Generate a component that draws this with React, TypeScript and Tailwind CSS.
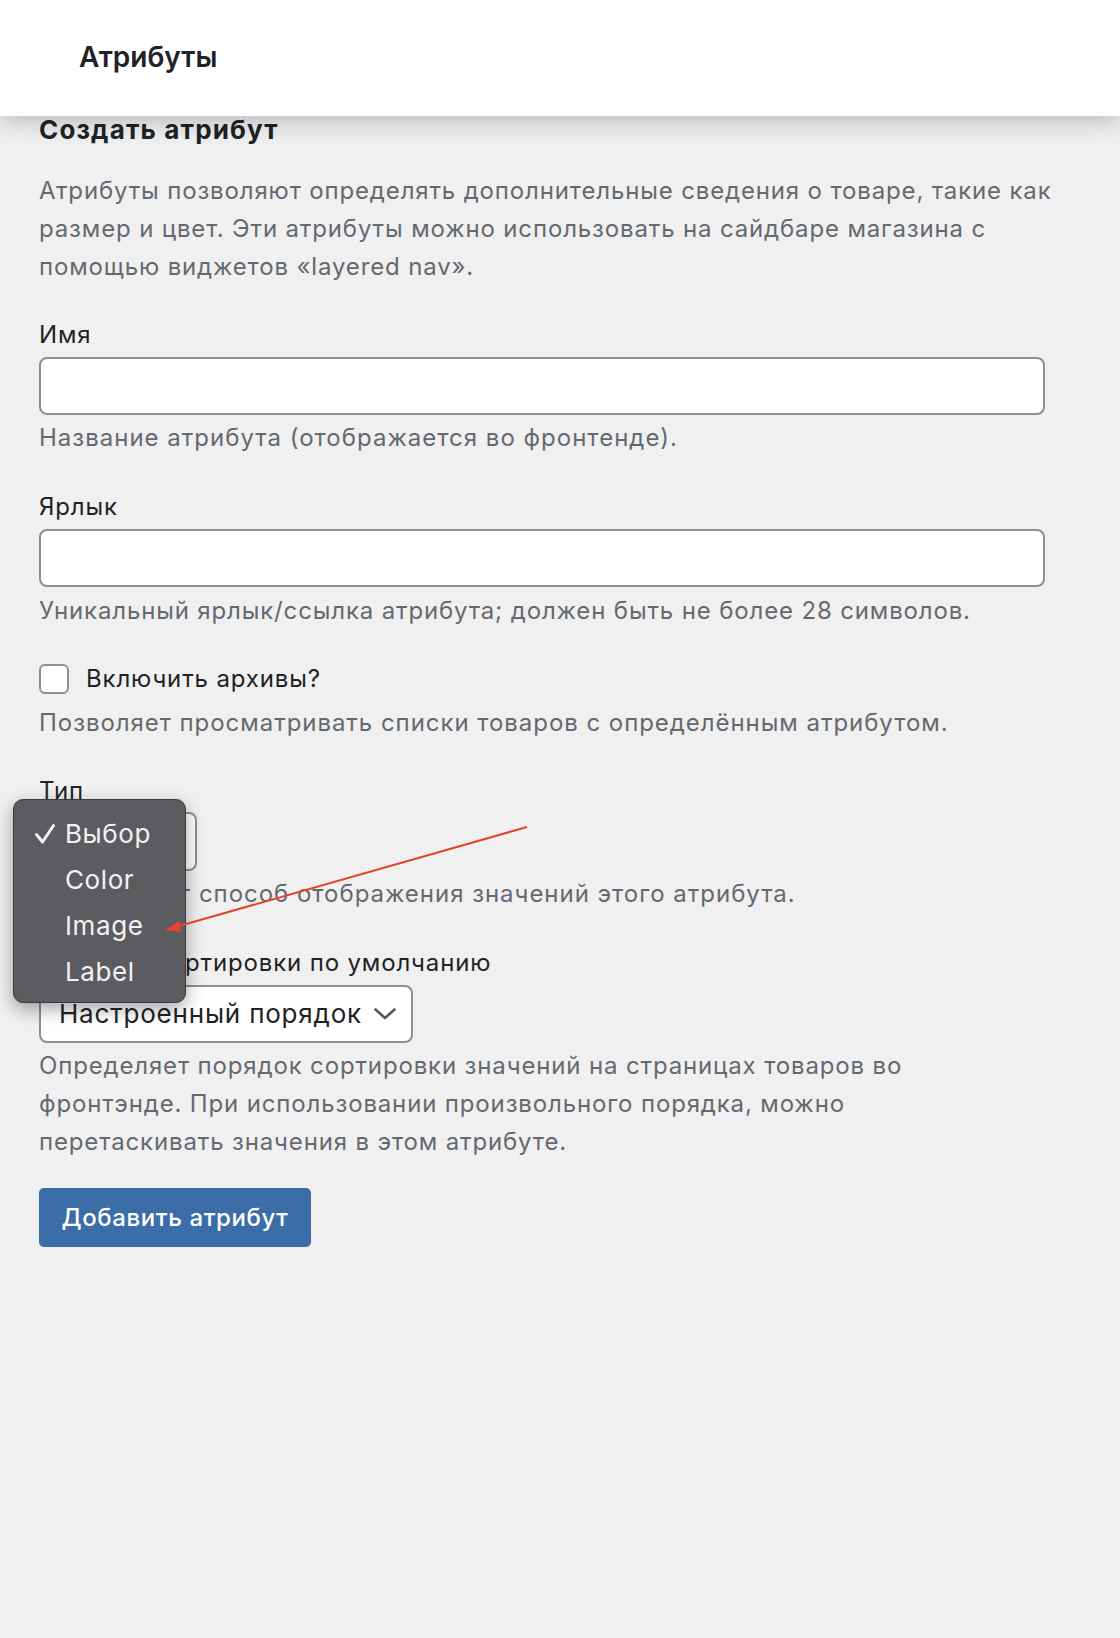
import React from "react";

const Chevron = ({ className }: { className?: string }) => (
  <svg className={className} width="22" height="12" viewBox="0 0 22 12" fill="none">
    <path d="M1.5 1.5 L11 10 L20.5 1.5" stroke="#50575e" strokeWidth="2.6" strokeLinecap="round" strokeLinejoin="round" />
  </svg>
);

const Check = () => (
  <svg width="22" height="22" viewBox="0 0 22 22" fill="none">
    <path d="M2.5 11.5 L8.5 19 L19.5 2.5" stroke="#f2f2f2" strokeWidth="3" strokeLinecap="round" strokeLinejoin="round" />
  </svg>
);

export default function App() {
  return (
    <div className="relative min-h-[1638px] w-[1120px] bg-[#f0f0f0] font-['Inter',sans-serif] text-[#1d2327] overflow-hidden">
      <header className="relative z-10 flex h-[116px] items-center bg-white pl-[79px] pb-[3px] shadow-[0_4px_24px_rgba(0,0,0,0.25)]">
        <h1 className="text-[28px] font-semibold leading-[36px] text-[#1d2327]">Атрибуты</h1>
      </header>

      <main className="pl-[39px] text-[24px] tracking-[0.85px]">
        <h2 className="text-[26px] font-bold leading-[28px] tracking-[1.15px] text-[#1d2327]">Создать атрибут</h2>

        <p className="mt-[28px] leading-[38px] text-[#646970]">
          <span className="block whitespace-nowrap">Атрибуты позволяют определять дополнительные сведения о товаре, такие как</span>
          <span className="block whitespace-nowrap">размер и цвет. Эти атрибуты можно использовать на сайдбаре магазина с</span>
          <span className="block whitespace-nowrap">помощью виджетов «layered nav».</span>
        </p>

        <label className="mt-[30px] block leading-[38px]">Имя</label>
        <div className="mt-[3px] h-[58px] w-[1006px] rounded-[8px] border-2 border-[#8c8f94] bg-white" />
        <p className="mt-[4px] leading-[38px] tracking-[1px] text-[#646970]">Название атрибута (отображается во фронтенде).</p>

        <label className="mt-[31px] block leading-[38px]">Ярлык</label>
        <div className="mt-[3px] h-[58px] w-[1006px] rounded-[8px] border-2 border-[#8c8f94] bg-white" />
        <p className="mt-[5px] leading-[38px] text-[#646970]">Уникальный ярлык/ссылка атрибута; должен быть не более 28 символов.</p>

        <div className="mt-[30px] flex h-[38px] items-center">
          <div className="h-[30px] w-[30px] rounded-[6px] border-2 border-[#8c8f94] bg-white" />
          <span className="ml-[17px] leading-[38px]">Включить архивы?</span>
        </div>
        <p className="mt-[6px] leading-[38px] tracking-[0.95px] text-[#646970]">Позволяет просматривать списки товаров с определённым атрибутом.</p>

        <label className="mt-[30px] block leading-[38px]">Тип</label>
        <div className="mt-[2px] flex h-[59px] w-[158px] items-center justify-between rounded-[8px] border-2 border-[#8c8f94] bg-white pl-[17px] pr-[14px]">
          <span>Выбор</span>
          <Chevron />
        </div>
        <p className="mt-[4px] leading-[38px] tracking-[0.97px] text-[#646970]">Определяет способ отображения значений этого атрибута.</p>

        <label className="mt-[31px] block leading-[38px]">Порядок сортировки по умолчанию</label>
        <div className="mt-[3px] flex h-[58px] w-[374px] items-center justify-between rounded-[8px] border-2 border-[#8c8f94] bg-white pl-[18px] pr-[15px]">
          <span className="text-[26px] leading-[38px] tracking-[0.8px] text-[#1d2327]">Настроенный порядок</span>
          <Chevron />
        </div>
        <p className="mt-[4px] leading-[38px] text-[#646970]">
          <span className="block whitespace-nowrap">Определяет порядок сортировки значений на страницах товаров во</span>
          <span className="block whitespace-nowrap">фронтэнде. При использовании произвольного порядка, можно</span>
          <span className="block whitespace-nowrap">перетаскивать значения в этом атрибуте.</span>
        </p>

        <button className="mt-[27px] flex h-[59px] w-[272px] items-center justify-center rounded-[5px] bg-[#3b6ea8] font-medium tracking-[0.6px] text-white">
          Добавить атрибут
        </button>
      </main>

      {/* Native select dropdown menu overlay */}
      <div className="absolute left-[13px] top-[799px] z-20 h-[204px] w-[173px] rounded-[10px] border border-[#3a3b3d] bg-[#5b5c5f] pt-[11px] shadow-[0_6px_18px_rgba(0,0,0,0.35)]">
        {[
          { t: "Выбор", c: true },
          { t: "Color", c: false },
          { t: "Image", c: false },
          { t: "Label", c: false },
        ].map((it) => (
          <div key={it.t} className="flex h-[46px] items-center text-[26px] leading-[46px] tracking-[0.6px] text-[#f2f2f2]">
            <span className="flex w-[51px] justify-start pl-[20px]">{it.c ? <Check /> : null}</span>
            <span>{it.t}</span>
          </div>
        ))}
      </div>

      {/* Red annotation arrow */}
      <svg className="pointer-events-none absolute left-0 top-0 z-30" width="1120" height="1638">
        <line x1="527" y1="827" x2="172" y2="928" stroke="#e5432d" strokeWidth="2" />
        <polygon points="165,930 179,921 181,932" fill="#e5432d" />
      </svg>
    </div>
  );
}
